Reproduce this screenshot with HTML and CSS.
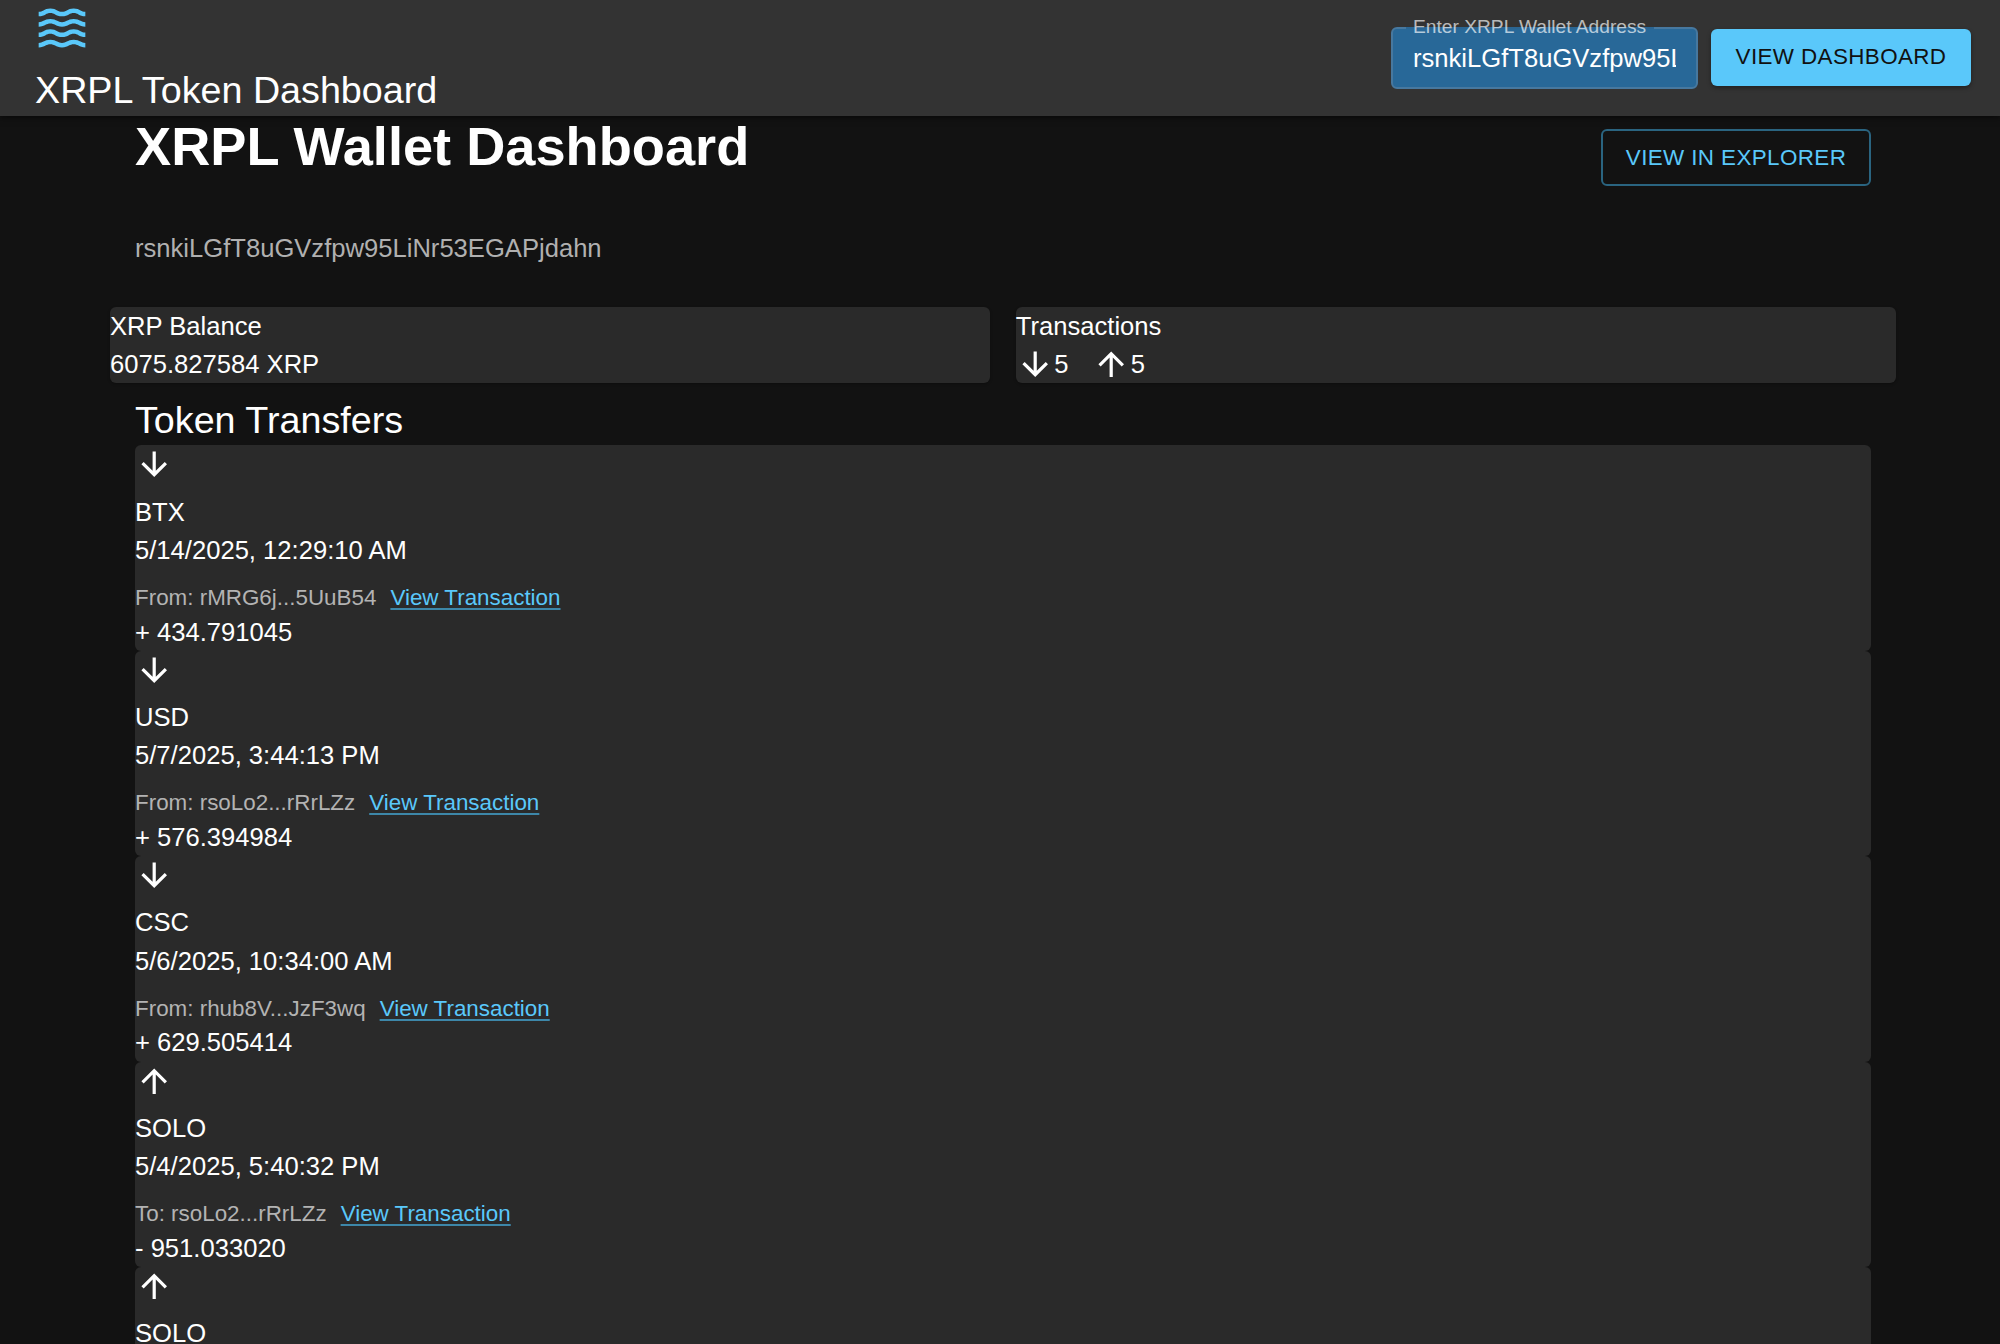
FILE: index.html
```html
<!DOCTYPE html>
<html lang="en">
<head>
<meta charset="utf-8">
<title>XRPL Token Dashboard</title>
<link rel="stylesheet" href="styles.css">
</head>
<body>
<header class="appbar">
  <div class="brand">
    <svg class="logo" viewBox="0 0 24 24"><path d="M17 16.99c-1.35 0-2.2.42-2.95.8-.65.33-1.18.6-2.05.6-.9 0-1.4-.25-2.05-.6-.75-.38-1.57-.8-2.95-.8s-2.2.42-2.95.8c-.65.33-1.17.6-2.05.6v1.95c1.35 0 2.2-.42 2.95-.8.65-.33 1.17-.6 2.05-.6s1.4.25 2.05.6c.75.38 1.57.8 2.95.8s2.2-.42 2.95-.8c.65-.33 1.18-.6 2.05-.6.9 0 1.4.25 2.05.6.75.38 1.58.8 2.95.8v-1.95c-.9 0-1.4-.25-2.05-.6-.75-.38-1.6-.8-2.95-.8zm0-4.45c-1.35 0-2.2.43-2.95.8-.65.32-1.18.6-2.05.6-.9 0-1.4-.25-2.05-.6-.75-.38-1.57-.8-2.95-.8s-2.2.43-2.95.8c-.65.32-1.17.6-2.05.6v1.95c1.35 0 2.2-.43 2.95-.8.65-.35 1.15-.6 2.05-.6s1.4.25 2.05.6c.75.38 1.57.8 2.95.8s2.2-.43 2.95-.8c.65-.35 1.15-.6 2.05-.6s1.4.25 2.05.6c.75.38 1.58.8 2.95.8v-1.95c-.9 0-1.4-.25-2.05-.6-.75-.38-1.6-.8-2.95-.8zm2.95-8.08c-.75-.38-1.58-.8-2.95-.8s-2.2.42-2.95.8c-.65.32-1.18.6-2.05.6-.9 0-1.4-.25-2.05-.6-.75-.37-1.57-.8-2.95-.8s-2.2.42-2.95.8c-.65.33-1.17.6-2.05.6v1.93c1.35 0 2.2-.43 2.95-.8.65-.33 1.17-.6 2.05-.6s1.4.25 2.05.6c.75.38 1.57.8 2.95.8s2.2-.43 2.95-.8c.65-.32 1.18-.6 2.05-.6.9 0 1.4.25 2.05.6.75.38 1.58.8 2.95.8V5.04c-.9 0-1.4-.25-2.05-.58zM17 8.09c-1.35 0-2.2.43-2.95.8-.65.35-1.15.6-2.05.6s-1.4-.25-2.05-.6c-.75-.38-1.57-.8-2.95-.8s-2.2.43-2.95.8c-.65.35-1.15.6-2.05.6v1.95c1.35 0 2.2-.43 2.95-.8.65-.32 1.18-.6 2.05-.6s1.4.25 2.05.6c.75.38 1.57.8 2.95.8s2.2-.43 2.95-.8c.65-.32 1.18-.6 2.05-.6.9 0 1.4.25 2.05.6.75.38 1.58.8 2.95.8V9.49c-.9 0-1.4-.25-2.05-.6-.75-.38-1.6-.8-2.95-.8z"/></svg>
    <div class="app-title">XRPL Token Dashboard</div>
  </div>
  <div class="search">
    <div class="field">
      <span class="field-notch"></span>
      <span class="field-label">Enter XRPL Wallet Address</span>
      <div class="field-value">rsnkiLGfT8uGVzfpw95LiNr53EGAPjdahn</div>
    </div>
    <button class="btn-primary">VIEW DASHBOARD</button>
  </div>
</header>
<main class="main">
  <div class="title-row">
    <h1 class="page-title">XRPL Wallet Dashboard</h1>
    <a class="btn-outline">VIEW IN EXPLORER</a>
  </div>
  <p class="address">rsnkiLGfT8uGVzfpw95LiNr53EGAPjdahn</p>
  <section class="stats">
    <div class="stat">
      <div class="line">XRP Balance</div>
      <div class="line">6075.827584 XRP</div>
    </div>
    <div class="stat">
      <div class="line">Transactions</div>
      <div class="line tx-counts">
        <svg class="arrow" viewBox="0 0 24 24"><path d="M20 12l-1.41-1.41L13 16.17V4h-2v12.17l-5.58-5.59L4 12l8 8 8-8z"/></svg><span class="count">5</span>
        <svg class="arrow" viewBox="0 0 24 24"><path d="M4 12l1.41 1.41L11 7.83V20h2V7.83l5.58 5.59L20 12l-8-8-8 8z"/></svg><span>5</span>
      </div>
    </div>
  </section>
  <h2 class="section-title">Token Transfers</h2>
  <div class="list">
    <article class="row">
      <div class="row-icon"><svg class="arrow" viewBox="0 0 24 24"><path d="M20 12l-1.41-1.41L13 16.17V4h-2v12.17l-5.58-5.59L4 12l8 8 8-8z"/></svg></div>
      <div class="line">BTX</div>
      <div class="line">5/14/2025, 12:29:10 AM</div>
      <div class="meta"><span>From: rMRG6j...5UuB54</span><a class="tx-link">View Transaction</a></div>
      <div class="line">+ 434.791045</div>
    </article>
    <article class="row">
      <div class="row-icon"><svg class="arrow" viewBox="0 0 24 24"><path d="M20 12l-1.41-1.41L13 16.17V4h-2v12.17l-5.58-5.59L4 12l8 8 8-8z"/></svg></div>
      <div class="line">USD</div>
      <div class="line">5/7/2025, 3:44:13 PM</div>
      <div class="meta"><span>From: rsoLo2...rRrLZz</span><a class="tx-link">View Transaction</a></div>
      <div class="line">+ 576.394984</div>
    </article>
    <article class="row">
      <div class="row-icon"><svg class="arrow" viewBox="0 0 24 24"><path d="M20 12l-1.41-1.41L13 16.17V4h-2v12.17l-5.58-5.59L4 12l8 8 8-8z"/></svg></div>
      <div class="line">CSC</div>
      <div class="line">5/6/2025, 10:34:00 AM</div>
      <div class="meta"><span>From: rhub8V...JzF3wq</span><a class="tx-link">View Transaction</a></div>
      <div class="line">+ 629.505414</div>
    </article>
    <article class="row">
      <div class="row-icon"><svg class="arrow" viewBox="0 0 24 24"><path d="M4 12l1.41 1.41L11 7.83V20h2V7.83l5.58 5.59L20 12l-8-8-8 8z"/></svg></div>
      <div class="line">SOLO</div>
      <div class="line">5/4/2025, 5:40:32 PM</div>
      <div class="meta"><span>To: rsoLo2...rRrLZz</span><a class="tx-link">View Transaction</a></div>
      <div class="line">- 951.033020</div>
    </article>
    <article class="row">
      <div class="row-icon"><svg class="arrow" viewBox="0 0 24 24"><path d="M4 12l1.41 1.41L11 7.83V20h2V7.83l5.58 5.59L20 12l-8-8-8 8z"/></svg></div>
      <div class="line">SOLO</div>
    </article>
  </div>
</main>
</body>
</html>
```
FILE: styles.css
```css
* { box-sizing: border-box; }
html, body { height: 100%; }
body {
  margin: 0;
  height: 1344px;
  overflow: hidden;
  background: #121212;
  color: #fff;
  font-family: "Liberation Sans", Arial, sans-serif;
  font-size: 25.6px;
  line-height: 38.4px;
}
.appbar {
  position: relative;
  z-index: 2;
  height: 116px;
  padding: 0 29px 0 34px;
  background: #333;
  box-shadow: 0 2px 6px rgba(0,0,0,.5);
  display: flex;
  justify-content: space-between;
}
.brand { display: flex; flex-direction: column; }
.logo { display: block; width: 56px; height: 56px; fill: #5ac8fa; }
.app-title { font-size: 37.7px; line-height: 50px; padding-left: 1px; margin-top: 9px; white-space: nowrap; }
.search { display: flex; align-items: flex-start; gap: 13px; padding-top: 27px; }
.field {
  position: relative;
  width: 307px;
  height: 62px;
  border: 2px solid #47789f;
  border-radius: 6px;
  background: #286898;
}
.field-notch { position: absolute; left: 13px; top: -2px; width: 248px; height: 2px; background: #2b6592; }
.field-label {
  position: absolute;
  left: 20px;
  top: -15px;
  font-size: 19.2px;
  line-height: 26px;
  color: rgba(255,255,255,.68);
  white-space: nowrap;
}
.field-value {
  margin: 0 20px 0 20px;
  height: 58px;
  line-height: 46px;
  padding-top: 6px;
  overflow: hidden;
  white-space: nowrap;
}
.btn-primary {
  margin: 2px 0 0;
  width: 260px;
  height: 57px;
  padding: 0;
  border: 0;
  border-radius: 6px;
  background: #5ac8fa;
  color: #111;
  font: inherit;
  font-size: 22.4px;
  letter-spacing: .4px;
  box-shadow: 0 2px 4px rgba(0,0,0,.35);
}
.main { width: 1736px; margin-left: 135px; }
.title-row { display: flex; justify-content: space-between; align-items: flex-start; }
.page-title { margin: -3px 0 0; font-size: 54.2px; line-height: 67px; font-weight: 700; }
.btn-outline {
  margin-top: 13px;
  width: 270px;
  height: 57px;
  border: 2px solid #2a6480;
  border-radius: 6px;
  color: #5ac8fa;
  font-size: 22.4px;
  line-height: 53px;
  letter-spacing: .4px;
  text-align: center;
}
.address { margin: 43px 0 0; color: #b0b0b0; }
.stats { display: flex; gap: 25.6px; margin: 40px -25px 0 -25px; }
.stat { flex: 1; height: 76px; border-radius: 6px; background: #2a2a2a; box-shadow: 0 1px 3px rgba(0,0,0,.3); }
.stat .line + .line { margin-top: -1px; }
.tx-counts { display: flex; align-items: center; }
.arrow { display: block; width: 38.4px; height: 38.4px; fill: #fff; flex: none; }
.count { margin-right: 24px; }
.section-title { margin: 12px 0 0; font-size: 37.7px; line-height: 50px; font-weight: 400; }
.list { display: flex; flex-direction: column; }
.row { height: 205.4px; border-radius: 6px; background: #2a2a2a; }
.row-icon { height: 47.2px; }
.meta { display: flex; gap: 14px; padding-top: 13.6px; font-size: 22.4px; line-height: 29.5px; color: #b3b3b3; }
.tx-link { color: #5ac8fa; text-decoration: underline; text-decoration-color: #3d87a9; text-underline-offset: 3px; }
```
